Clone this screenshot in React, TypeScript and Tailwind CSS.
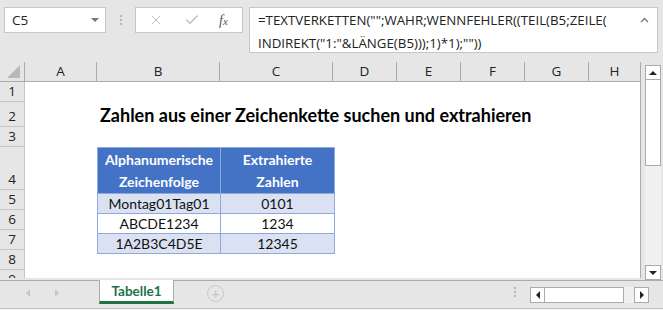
import { X, Check } from "lucide-react";

const cols = ["A", "B", "C", "D", "E", "F", "G", "H"];
const rowHeights = [20, 25, 20, 43, 20, 20, 20, 20, 10];

const daten = [
  { text: "Montag01Tag01", zahl: "0101", shaded: true },
  { text: "ABCDE1234", zahl: "1234", shaded: false },
  { text: "1A2B3C4D5E", zahl: "12345", shaded: true },
];

function FormulaBar() {
  return (
    <div className="flex h-[62px] items-start pt-[7px] font-['Open_Sans',sans-serif]">
      <div className="ml-[4px] flex h-[26px] w-[102px] items-center justify-between border border-[#c6c6c6] bg-white pl-[7px] pr-[6px] text-[13.5px] text-[#222]">
        <span>C5</span>
        <span className="h-0 w-0 border-x-[4px] border-t-[4px] border-x-transparent border-t-[#777]" />
      </div>
      <div className="ml-[14px] mt-[8px] flex flex-col gap-[2px]">
        <span className="h-[2px] w-[2px] bg-[#b4b4b4]" />
        <span className="h-[2px] w-[2px] bg-[#b4b4b4]" />
        <span className="h-[2px] w-[2px] bg-[#b4b4b4]" />
      </div>
      <div className="ml-[13px] flex h-[26px] w-[108px] items-center border border-[#c6c6c6] bg-white text-[#bcbcbc]">
        <X size={16} strokeWidth={1.5} className="ml-[12px]" />
        <Check size={16} strokeWidth={2} className="ml-[20px]" />
        <span className="ml-[19px] font-['Liberation_Serif'] text-[14px] italic text-[#555]">
          f<span className="text-[11px]">x</span>
        </span>
      </div>
      <div className="ml-[6px] flex h-[46px] w-[409px] items-start justify-between border border-[#c6c6c6] bg-white pl-[8px] pr-[8px] pt-[1px] text-[13.3px] leading-[23px] text-[#222]">
        <div>
          <div>=TEXTVERKETTEN("";WAHR;WENNFEHLER((TEIL(B5;ZEILE(</div>
          <div>INDIREKT("1:"&amp;LÄNGE(B5)));1)*1);""))</div>
        </div>
        <svg width="9" height="6" viewBox="0 0 9 6" className="mt-[8px]">
          <path d="M1 5 L4.5 1.5 L8 5" fill="none" stroke="#777" strokeWidth="1.3" />
        </svg>
      </div>
    </div>
  );
}

function Sheet() {
  return (
    <div className="grid w-[641px] grid-cols-[25px_72px_123px_113px_64px_64px_64px_64px_52px] grid-rows-[20px_20px_25px_20px_43px_20px_20px_20px_20px_8px] border-r border-[#ababab] bg-white font-['Lato',sans-serif]">
      <div className="relative border-b border-r border-[#ababab] bg-[#e6e6e6]">
        <svg width="14" height="13" viewBox="0 0 14 13" className="absolute bottom-[3px] right-[3px]">
          <path d="M13 0 L13 13 L0 13 Z" fill="#b9b9b9" />
        </svg>
      </div>
      {cols.map((c) => (
        <div
          key={c}
          className="flex items-center justify-center border-b border-r border-[#ababab] bg-[#e6e6e6] font-['Open_Sans',sans-serif] text-[13.5px] text-[#222] last:border-r-0"
        >
          {c}
        </div>
      ))}
      {rowHeights.map((_, i) => (
        <div
          key={i}
          style={{ gridRow: i + 2 }}
          className={
            i === 8
              ? "col-start-1 flex items-start justify-center overflow-hidden border-r border-[#c6c6c6] bg-[#e6e6e6] pt-[1px] font-['Open_Sans',sans-serif] text-[13.5px] leading-[17px] text-[#222]"
              : "col-start-1 flex items-end justify-center overflow-hidden border-b border-r border-[#c6c6c6] bg-[#e6e6e6] pb-[1px] font-['Open_Sans',sans-serif] text-[13.5px] leading-[17px] text-[#222]"
          }
        >
          {i + 1}
        </div>
      ))}
      <div className="col-span-7 col-start-3 row-start-3 flex items-end pb-[1px] pl-[3px] text-[18px] font-bold leading-[22px] text-black">
        Zahlen aus einer Zeichenkette suchen und extrahieren
      </div>
      <div className="col-span-2 col-start-3 row-span-4 row-start-5">
        <table className="h-[104px] w-[237px] table-fixed border-collapse text-center text-[14px] text-[#111]">
          <colgroup>
            <col className="w-[123px]" />
            <col className="w-[114px]" />
          </colgroup>
          <thead>
            <tr className="h-[44px] bg-[#4472c4] leading-[22px] text-white">
              <th className="border border-[#8ea9db] pt-[1px] font-bold">
                Alphanumerische
                <br />
                Zeichenfolge
              </th>
              <th className="border border-[#8ea9db] pt-[1px] font-bold">
                Extrahierte
                <br />
                Zahlen
              </th>
            </tr>
          </thead>
          <tbody>
            {daten.map((d) => (
              <tr key={d.text} className={d.shaded ? "h-[20px] bg-[#d9e1f2]" : "h-[20px] bg-white"}>
                <td className="border border-[#8ea9db] leading-[18px]">{d.text}</td>
                <td className="border border-[#8ea9db] leading-[18px]">{d.zahl}</td>
              </tr>
            ))}
          </tbody>
        </table>
      </div>
    </div>
  );
}

function VScroll() {
  return (
    <div className="ml-[4px] mt-[3px] flex h-[215px] w-[16px] flex-col bg-[#f0f0f0]">
      <div className="flex h-[15px] items-center justify-center border border-[#ababab] bg-white">
        <span className="h-0 w-0 border-x-[4px] border-b-[4px] border-x-transparent border-b-[#222]" />
      </div>
      <div className="h-[86px] border-x border-b border-[#ababab] bg-white" />
      <div className="flex-1" />
      <div className="flex h-[15px] items-center justify-center border border-[#ababab] bg-white">
        <span className="h-0 w-0 border-x-[4px] border-t-[4px] border-x-transparent border-t-[#222]" />
      </div>
    </div>
  );
}

function TabBar() {
  return (
    <div className="flex h-[28px] items-start border-t border-[#ababab] font-['Lato',sans-serif]">
      <div className="flex w-[99px] items-center pt-[8px] text-[#c6c6c6]">
        <span className="ml-[26px] h-0 w-0 border-y-[4px] border-r-[4px] border-y-transparent border-r-[#c6c6c6]" />
        <span className="ml-[25px] h-0 w-0 border-y-[4px] border-l-[4px] border-y-transparent border-l-[#c6c6c6]" />
      </div>
      <div className="-mt-[1px] flex h-[24px] w-[75px] items-center justify-center border-x border-[#ababab] border-b-[3px] border-b-[#217346] bg-white pt-[2px] text-[13.5px] font-bold text-[#217346]">
        Tabelle1
      </div>
      <div className="ml-[33px] mt-[4px] flex h-[17px] w-[17px] items-center justify-center rounded-full border border-[#c6c6c6] text-[15px] leading-none text-[#c6c6c6]">
        +
      </div>
      <div className="ml-[290px] mt-[6px] flex flex-col gap-[2px]">
        <span className="h-[2px] w-[2px] bg-[#b4b4b4]" />
        <span className="h-[2px] w-[2px] bg-[#b4b4b4]" />
        <span className="h-[2px] w-[2px] bg-[#b4b4b4]" />
      </div>
      <div className="ml-[14px] mt-[6px] flex h-[16px] w-[119px] bg-[#f0f0f0]">
        <div className="flex w-[15px] items-center justify-center border border-[#ababab] bg-white">
          <span className="h-0 w-0 border-y-[4px] border-r-[4px] border-y-transparent border-r-[#222]" />
        </div>
        <div className="w-[79px] border-y border-r border-[#ababab] bg-white" />
        <div className="flex-1" />
        <div className="flex w-[15px] items-center justify-center border border-[#ababab] bg-white">
          <span className="h-0 w-0 border-y-[4px] border-l-[4px] border-y-transparent border-l-[#222]" />
        </div>
      </div>
    </div>
  );
}

export default function App() {
  return (
    <div className="flex h-[310px] w-[663px] flex-col overflow-hidden bg-[#e6e6e6] font-['Open_Sans',sans-serif]">
      <FormulaBar />
      <div className="flex h-[218px] items-start">
        <Sheet />
        <VScroll />
      </div>
      <TabBar />
      <div className="h-[2px] border-t border-[#c6c6c6] bg-[#f0f0f0]" />
    </div>
  );
}
